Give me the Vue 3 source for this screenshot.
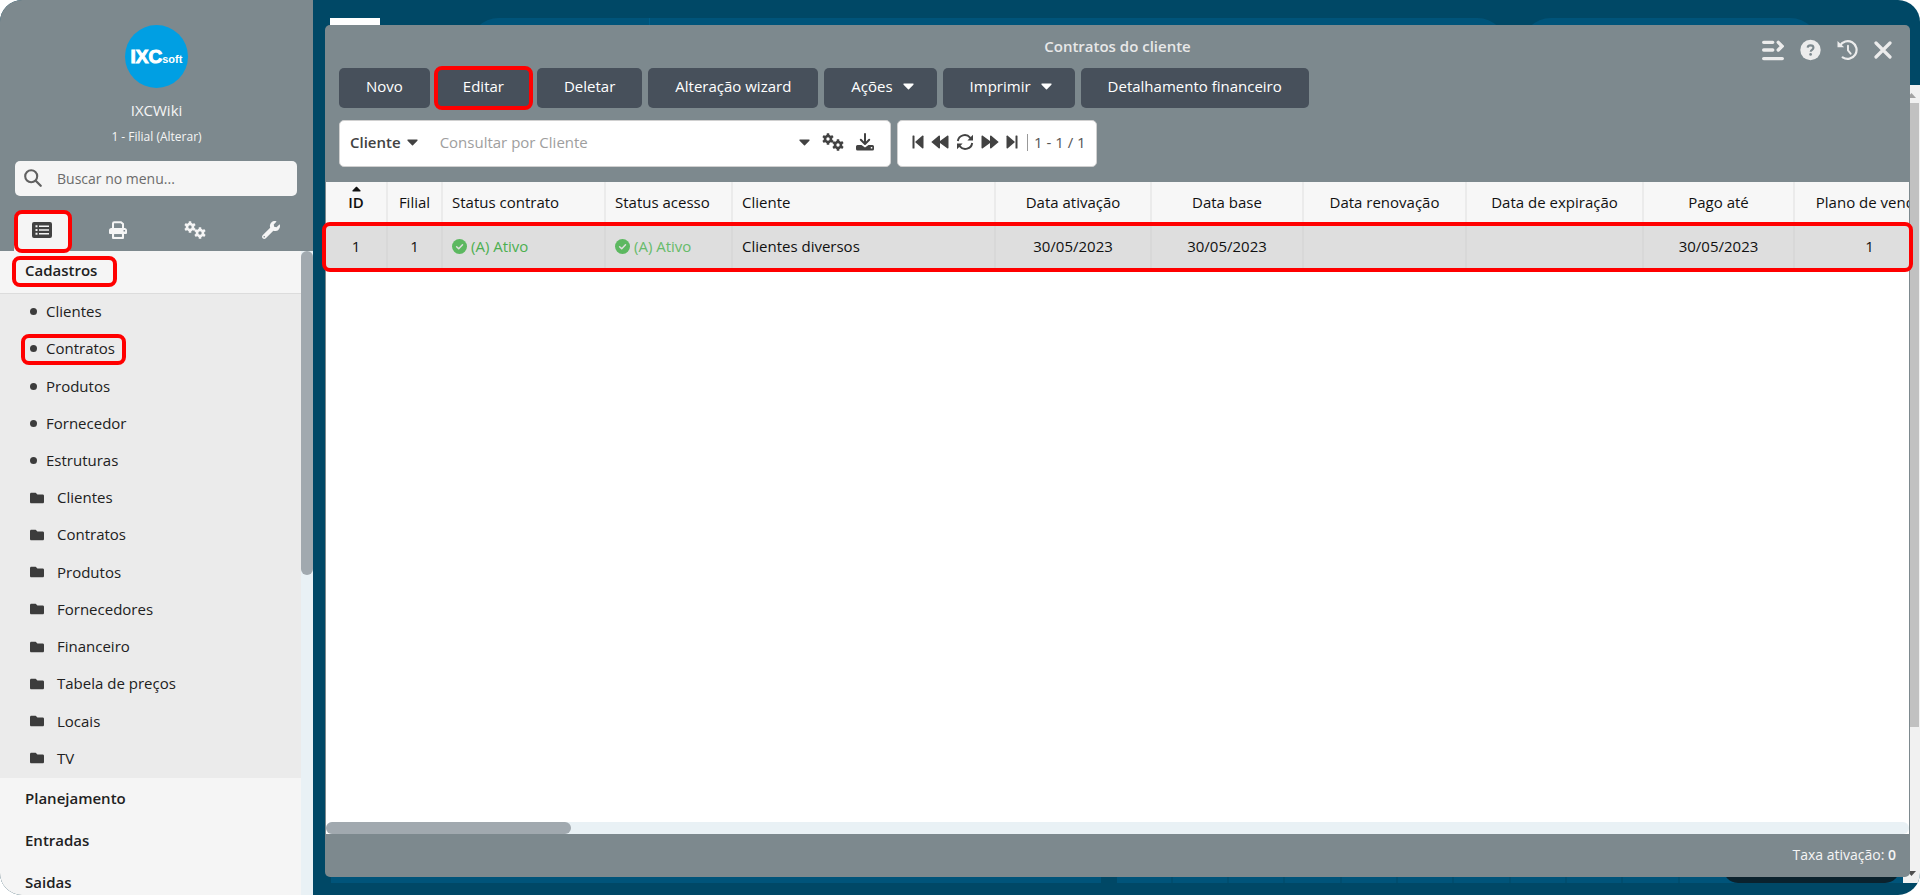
<script setup>
import { ref } from 'vue'

const menuSearch = ref('')
const query = ref('')

const tabs = [
  { id: 'list', label: 'Menu', active: true },
  { id: 'print', label: 'Relatórios' },
  { id: 'gears', label: 'Configurações' },
  { id: 'wrench', label: 'Ferramentas' },
]

const links = [
  { text: 'Clientes' },
  { text: 'Contratos', marked: true },
  { text: 'Produtos' },
  { text: 'Fornecedor' },
  { text: 'Estruturas' },
]
const folders = ['Clientes', 'Contratos', 'Produtos', 'Fornecedores', 'Financeiro', 'Tabela de preços', 'Locais', 'TV']
const sections = ['Planejamento', 'Entradas', 'Saidas']

const actions = [
  { text: 'Novo' },
  { text: 'Editar', marked: true },
  { text: 'Deletar' },
  { text: 'Alteração wizard' },
  { text: 'Ações', caret: true },
  { text: 'Imprimir', caret: true },
  { text: 'Detalhamento financeiro' },
]

const columns = [
  { key: 'id', label: 'ID', sorted: true },
  { key: 'filial', label: 'Filial' },
  { key: 'contrato', label: 'Status contrato', left: true },
  { key: 'acesso', label: 'Status acesso', left: true },
  { key: 'cliente', label: 'Cliente', left: true },
  { key: 'ativacao', label: 'Data ativação' },
  { key: 'base', label: 'Data base' },
  { key: 'renovacao', label: 'Data renovação' },
  { key: 'expiracao', label: 'Data de expiração' },
  { key: 'pago', label: 'Pago até' },
  { key: 'plano', label: 'Plano de venda' },
]
const row = {
  id: '1', filial: '1', contrato: '(A) Ativo', acesso: '(A) Ativo', cliente: 'Clientes diversos',
  ativacao: '30/05/2023', base: '30/05/2023', renovacao: '', expiracao: '', pago: '30/05/2023', plano: '1',
}
const teeth = [0, 60, 120, 180, 240, 300]
</script>

<template>
  <svg class="defs" aria-hidden="true">
    <symbol id="gear" viewBox="0 0 20 20">
      <circle cx="10" cy="10" r="5" fill="none" stroke="currentColor" stroke-width="4.4" />
      <rect v-for="t in teeth" :key="t" x="7.8" y="0.3" width="4.4" height="5" rx="1" fill="currentColor" :transform="`rotate(${t} 10 10)`" />
    </symbol>
    <symbol id="gears" viewBox="0 0 22 18">
      <use href="#gear" x="0" y="0" width="12" height="12" />
      <use href="#gear" x="10" y="6" width="12" height="12" />
    </symbol>
    <symbol id="caret" viewBox="0 0 320 180">
      <path fill="currentColor" d="M31.3 5h257.3c17.8 0 26.7 21.5 14.1 34.1L174.1 167.8c-7.8 7.8-20.5 7.8-28.3 0L17.2 39.1C4.6 26.500 13.5 5 31.3 5z" />
    </symbol>
    <symbol id="folder" viewBox="0 64 512 384">
      <path fill="currentColor" d="M464 128H272l-64-64H48C21.490 64 0 85.490 0 112v288c0 26.510 21.490 48 48 48h416c26.510 0 48-21.490 48-48V176c0-26.510-21.490-48-48-48z" />
    </symbol>
    <symbol id="list" viewBox="0 0 20 16">
      <path fill="currentColor" fill-rule="evenodd" d="M2 0h16a2 2 0 0 1 2 2v12a2 2 0 0 1-2 2H2a2 2 0 0 1-2-2V2a2 2 0 0 1 2-2zM3.500 3.200v2h2v-2zM3.500 7v2h2V7zM3.500 10.800v2h2v-2zM7 3.500v1.400h10V3.500zM7 7.300v1.400h10V7.300zM7 11.100v1.400h10v-1.400z" />
    </symbol>
    <symbol id="print" viewBox="0 0 18 18">
      <path fill="none" stroke="currentColor" stroke-width="2" d="M4 7V2.500A1.300 1.300 0 0 1 5.300 1.200H12L14 3v4" />
      <path fill="currentColor" fill-rule="evenodd" d="M2.500 7h13A2.500 2.500 0 0 1 18 9.500V12a1 1 0 0 1-1 1H1a1 1 0 0 1-1-1V9.500A2.500 2.500 0 0 1 2.500 7zM14.500 9v1.600h1.600V9z" />
      <path fill="currentColor" fill-rule="evenodd" d="M3 11h12v6a1 1 0 0 1-1 1H4a1 1 0 0 1-1-1zM5.200 13.200v2.600h7.600v-2.600z" />
      <rect x="5.200" y="13.200" width="7.600" height="2.600" fill="#7d898e" />
    </symbol>
    <symbol id="wrench" viewBox="0 0 512 512">
      <path fill="currentColor" d="M507.730 109.100c-2.240-9.030-13.540-12.090-20.120-5.510l-74.360 74.360-67.880-11.310-11.310-67.880 74.360-74.360c6.620-6.620 3.430-17.900-5.660-20.160-47.380-11.740-99.550.91-136.580 37.930-39.640 39.640-50.550 97.100-34.050 147.200L18.740 402.760c-24.990 24.990-24.990 65.510 0 90.500 24.990 24.990 65.510 24.990 90.500 0l213.210-213.210c50.120 16.710 107.470 5.680 147.370-34.220 37.070-37.070 49.700-89.320 37.910-136.730zM64 472c-13.250 0-24-10.750-24-24 0-13.260 10.750-24 24-24s24 10.740 24 24c0 13.250-10.750 24-24 24z" />
    </symbol>
    <symbol id="check" viewBox="0 0 15 15">
      <circle cx="7.500" cy="7.500" r="7.500" fill="currentColor" />
      <path d="M4.600 7.700l2.100 2.100 3.800-4" fill="none" stroke="#dedede" stroke-width="1.500" stroke-linecap="round" stroke-linejoin="round" />
    </symbol>
    <symbol id="download" viewBox="0 0 18 18">
      <path d="M9 1v9M4.800 6.800L9 11l4.200-4.200" fill="none" stroke="currentColor" stroke-width="2" stroke-linecap="round" stroke-linejoin="round" />
      <path fill="currentColor" fill-rule="evenodd" d="M1.500 12h4L9 14.600 12.500 12h4A1.500 1.500 0 0 1 18 13.500v2.500a1.500 1.500 0 0 1-1.500 1.500h-15A1.500 1.500 0 0 1 0 16v-2.500A1.500 1.500 0 0 1 1.500 12zM14.800 14v1.500h1.500V14z" />
    </symbol>
    <symbol id="first" viewBox="0 0 12 14">
      <rect x="0.500" y="0.500" width="2" height="13" rx="0.600" fill="currentColor" />
      <path fill="currentColor" d="M3 7L10.200.7c.6-.5 1.300-.1 1.300.6v11.400c0 .7-.7 1.100-1.300.6z" />
    </symbol>
    <symbol id="rewind" viewBox="0 0 18 14">
      <path fill="currentColor" d="M.3 7L7.700.7c.6-.5 1.300-.1 1.300.6v4.600L16.200.7c.6-.5 1.300-.1 1.300.6v11.400c0 .7-.7 1.100-1.300.6L9 8.100v4.600c0 .7-.7 1.100-1.300.6z" />
    </symbol>
    <symbol id="sync" viewBox="0 0 17 16">
      <path d="M1.300 7A7 7 0 0 1 13.600 3.600L15 5M15.700 9A7 7 0 0 1 3.400 12.400L2 11" fill="none" stroke="currentColor" stroke-width="1.900" />
      <path fill="currentColor" d="M16.500.8v5.600h-5.600zM.5 15.200V9.600h5.600z" />
    </symbol>
    <symbol id="expand" viewBox="0 0 23 23">
      <path d="M1.800 3.500h9.400M1.800 11.500h9.400M1.800 20.500h19.400M17 3.500l4 4-4 4" fill="none" stroke="currentColor" stroke-width="3.600" stroke-linecap="round" />
    </symbol>
    <symbol id="help" viewBox="0 0 22 22">
      <circle cx="11" cy="11" r="10.700" fill="currentColor" />
      <path d="M8 8.400C8.200 6.800 9.400 6.200 11 6.200c1.800 0 3.100 1 3.100 2.500 0 2-2.900 2.200-2.900 4.100" fill="none" stroke="#7d898e" stroke-width="2.200" />
      <circle cx="11.100" cy="15.600" r="1.400" fill="#7d898e" />
    </symbol>
    <symbol id="history" viewBox="0 0 22 22">
      <path d="M3 6.600A9.300 9.300 0 1 1 6 18.700" fill="none" stroke="currentColor" stroke-width="2.300" stroke-linecap="round" />
      <path d="M11.500 6.500v5l2.800 3.400" fill="none" stroke="currentColor" stroke-width="2" stroke-linecap="round" />
      <path d="M.5 1.500L7.500 8H.5z" fill="currentColor" />
    </symbol>
    <symbol id="close" viewBox="0 0 18 18">
      <path d="M2 2l14 14M16 2L2 16" fill="none" stroke="currentColor" stroke-width="3.200" stroke-linecap="round" />
    </symbol>
    <symbol id="search" viewBox="0 0 18 18">
      <circle cx="7.200" cy="7.200" r="6" fill="none" stroke="currentColor" stroke-width="2.100" />
      <path d="M11.700 11.700l5 5" stroke="currentColor" stroke-width="2.300" stroke-linecap="round" />
    </symbol>
  </svg>

  <div class="app">
    <aside class="sidebar">
      <header class="profile">
        <div class="logo"><b>IXC</b><small>soft</small></div>
        <div class="company">IXCWiki</div>
        <a class="branch" href="#">1 - Filial (Alterar)</a>
        <label class="menu-search">
          <svg><use href="#search" /></svg>
          <input v-model="menuSearch" type="text" placeholder="Buscar no menu..." aria-label="Buscar no menu">
        </label>
        <nav class="tabs">
          <button v-for="t in tabs" :key="t.id" type="button" :class="['tab', t.id, { active: t.active, marked: t.active }]" :aria-label="t.label">
            <svg><use :href="'#' + t.id" /></svg>
          </button>
        </nav>
      </header>
      <div class="menu">
        <nav class="menu-list">
          <a href="#" class="section open"><span class="marked">Cadastros</span></a>
          <ul class="submenu">
            <li v-for="l in links" :key="l.text">
              <a href="#" :class="['link', { marked: l.marked }]"><i class="dot"></i>{{ l.text }}</a>
            </li>
            <li v-for="f in folders" :key="f">
              <a href="#" class="link folder"><svg><use href="#folder" /></svg>{{ f }}</a>
            </li>
          </ul>
          <a v-for="s in sections" :key="s" href="#" class="section">{{ s }}</a>
        </nav>
        <div class="vtrack"><div class="vthumb"></div></div>
      </div>
    </aside>

    <main class="desktop">
      <div class="backdrop" aria-hidden="true">
        <div class="bg-top">
          <i class="bg-logo"></i><i class="bg-card wide"></i><i class="bg-card small"></i>
        </div>
        <div class="bg-bottom">
          <i class="bg-panel"></i>
          <div class="bg-calendar"><i v-for="n in 14" :key="n"></i></div>
        </div>
        <i class="bg-chat"></i>
        <div class="bg-scroll">
          <svg viewBox="0 0 17 18"><path d="M4 13l4.500-5 4.500 5z" fill="#a3a3a3" /></svg>
          <i></i>
          <svg viewBox="0 0 17 18"><path d="M4 6h9l-4.500 5z" fill="#505050" /></svg>
        </div>
      </div>

      <section class="window">
        <header class="head">
          <h1>Contratos do cliente</h1>
          <div class="controls">
            <button type="button" aria-label="Expandir"><svg><use href="#expand" /></svg></button>
            <button type="button" aria-label="Ajuda" class="round"><svg><use href="#help" /></svg></button>
            <button type="button" aria-label="Histórico" class="round"><svg><use href="#history" /></svg></button>
            <button type="button" aria-label="Fechar" class="close"><svg><use href="#close" /></svg></button>
          </div>
          <div class="actions">
            <button v-for="a in actions" :key="a.text" type="button" :class="['action', { marked: a.marked }]">
              {{ a.text }}<svg v-if="a.caret" class="caret"><use href="#caret" /></svg>
            </button>
          </div>
          <div class="filters">
            <div class="search">
              <button type="button" class="field">Cliente<svg class="caret"><use href="#caret" /></svg></button>
              <input v-model="query" type="text" placeholder="Consultar por Cliente" aria-label="Consultar por Cliente">
              <button type="button" aria-label="Opções"><svg class="caret"><use href="#caret" /></svg></button>
              <button type="button" aria-label="Filtros"><svg class="i-gears"><use href="#gears" /></svg></button>
              <button type="button" aria-label="Baixar"><svg class="i-down"><use href="#download" /></svg></button>
            </div>
            <div class="pager">
              <button type="button" aria-label="Primeira"><svg class="i-end"><use href="#first" /></svg></button>
              <button type="button" aria-label="Anterior"><svg class="i-step"><use href="#rewind" /></svg></button>
              <button type="button" aria-label="Atualizar"><svg class="i-step"><use href="#sync" /></svg></button>
              <button type="button" aria-label="Próxima"><svg class="i-step flip"><use href="#rewind" /></svg></button>
              <button type="button" aria-label="Última"><svg class="i-end flip"><use href="#first" /></svg></button>
              <span class="range">1 - 1 / 1</span>
            </div>
          </div>
        </header>

        <div class="grid">
          <div class="grid-view">
            <table>
              <colgroup><col v-for="c in columns" :key="c.key" :class="'c-' + c.key"></colgroup>
              <thead>
                <tr>
                  <th v-for="c in columns" :key="c.key" scope="col" :class="{ left: c.left, sorted: c.sorted }">
                    <svg v-if="c.sorted" class="sort"><use href="#caret" /></svg>{{ c.label }}
                  </th>
                </tr>
              </thead>
              <tbody>
                <tr>
                  <td v-for="c in columns" :key="c.key" :class="{ left: c.left }">
                    <span v-if="c.key === 'contrato' || c.key === 'acesso'" :class="['status', c.key]"><svg><use href="#check" /></svg>{{ row[c.key] }}</span>
                    <template v-else>{{ row[c.key] }}</template>
                  </td>
                </tr>
              </tbody>
            </table>
          </div>
          <div class="htrack"><div class="hthumb"></div></div>
          <i class="row-mark"></i>
        </div>
        <footer class="foot">Taxa ativação: <b>0</b></footer>
      </section>
    </main>
  </div>
</template>

<style>
body { background: #fff; }
</style>

<style scoped>
* { box-sizing: border-box; }
.defs { position: absolute; width: 0; height: 0; }
.app {
  display: flex;
  height: 100vh;
  border-radius: 22px;
  overflow: hidden;
  background: #004866;
  font-family: "Open Sans", "Noto Sans", sans-serif;
  font-size: 15px;
  color: #212121;
}
a { color: inherit; text-decoration: none; }
i { display: block; }
svg { display: block; }
button { border: 0; padding: 0; background: none; font: inherit; color: inherit; cursor: pointer; }
input { border: 0; outline: 0; background: none; font: inherit; color: inherit; min-width: 0; }
.marked { position: relative; }
.marked::after {
  content: "";
  position: absolute;
  inset: -2px;
  border: 4px solid #f00;
  border-radius: 8px;
}

/* Sidebar */
.sidebar { width: 313px; flex: none; display: flex; flex-direction: column; background: #7d898e; }
.profile { display: flex; flex-direction: column; align-items: center; padding-top: 25px; color: #f5f5f5; }
.logo {
  width: 63px; height: 63px; border-radius: 50%;
  background: #009fe3; color: #fff;
  display: flex; align-items: baseline; justify-content: center;
  font-family: "Liberation Sans", Arial, sans-serif;
  line-height: 64px;
}
.logo b { font-size: 19px; -webkit-text-stroke: 1px #fff; }
.logo small { font-size: 11px; font-weight: bold; }
.company { margin-top: 12px; font-size: 15px; font-weight: 500; line-height: 20px; }
.branch { margin-top: 8px; font-size: 12px; line-height: 18px; }
.menu-search {
  align-self: stretch; height: 35px; margin: 15px 16px 0 15px; padding: 0 9px 1px;
  display: flex; align-items: center; gap: 13px;
  border-radius: 5px; background: #f5f5f5; color: #616161;
}
.menu-search svg { width: 18px; height: 18px; flex: none; }
.menu-search input { flex: 1; font-size: 14px; }
.menu-search input::placeholder { color: #6b6b6b; opacity: 1; }
.tabs { align-self: stretch; display: flex; justify-content: space-between; margin-top: 16px; padding: 0 14px; }
.tab { width: 56px; height: 39px; padding-bottom: 4px; display: flex; align-items: center; justify-content: center; }
.tab.active { background: #f5f5f5; color: #424242; border-radius: 8px 8px 0 0; }
.tab.active::after { inset: -2px -2px -2px 0; }
.tab svg { width: 18px; height: 18px; }
.tab.list svg { width: 20px; height: 16px; }
.tab.gears svg { width: 22px; height: 18px; }
.menu { flex: 1; min-height: 0; display: flex; overflow: hidden; background: #f5f5f5; }
.menu-list { flex: 1; }
.section { display: block; padding: 0 25px 2px; font-weight: 600; line-height: 40px; }
.section.open { border-bottom: 1px solid #dcdcdc; line-height: 38px; padding-bottom: 4px; }
.section.open .marked { display: inline-block; line-height: 31px; }
.section.open .marked::after { inset: 1px -20px -1px -13px; }
.submenu { list-style: none; margin: 0; padding: 0 0 0 30px; min-height: 484px; display: grid; grid-auto-rows: 1fr; background: #ebebeb; }
.submenu li { display: flex; align-items: center; padding-bottom: 2px; }
.link { display: flex; align-items: center; gap: 9px; line-height: 21px; }
.link.marked::after { inset: -4px -11px -6px -9px; }
.link.folder { gap: 13px; }
.link svg { width: 14px; height: 12px; color: #3c3c3c; }
.dot { width: 7px; height: 7px; border-radius: 50%; background: #3c3c3c; }
.vtrack { width: 12px; background: #e9f1f5; }
.vthumb { height: 324px; border-radius: 6px; background: #a1a9af; }

/* Desktop behind the window */
.desktop { position: relative; flex: 1; min-width: 0; padding: 25px 10px 18px 12px; display: flex; }
.backdrop { position: absolute; inset: 18px 0 12px; }
.bg-top { display: flex; height: 76px; padding: 0 100px 0 17px; }
.bg-logo { width: 50px; background: #fff; }
.bg-card { background: #00547a; border-radius: 30px; }
.bg-card.wide { flex: 1; margin-left: 89px; background: linear-gradient(90deg, #00547a 180px, #005f8a 180px, #005f8a 181px, #00547a 181px); }
.bg-card.small { width: 299px; margin-left: 14px; }
.bg-bottom { position: absolute; left: 18px; right: 17px; bottom: 0; height: 12px; display: flex; gap: 16px; }
.bg-panel { flex: 770; background: #00547a; }
.bg-calendar { flex: 787; display: flex; gap: 2px; background: #004e70; }
.bg-calendar i { flex: 1; background: #00547a; }
.bg-chat { position: absolute; right: 20px; bottom: 0; width: 177px; height: 30px; border-radius: 15px; background: #0b222d; }
.bg-scroll { position: absolute; right: 0; top: 67px; bottom: 0; width: 17px; background: #f1f1f1; display: flex; flex-direction: column; }
.bg-scroll svg { width: 17px; height: 18px; flex: none; }
.bg-scroll i { height: 624px; width: 16px; margin-bottom: auto; background: #c1c1c1; }

/* Window */
.window { position: relative; flex: 1; min-width: 0; display: flex; flex-direction: column; background: #7d898e; border-radius: 5px; }
.head { position: relative; padding: 10px 14px 15px; color: #f0f0f0; }
h1 { margin: 0; text-align: center; font-size: 15px; font-weight: 600; line-height: 22px; color: #e8e8e8; }
.controls { position: absolute; top: 14px; right: 18px; display: flex; align-items: center; gap: 16px; color: #ececec; }
.controls svg { width: 22px; height: 22px; }
.controls .round svg { width: 21px; }
.controls .close svg { width: 18px; height: 18px; }
.actions { display: flex; gap: 6px; margin-top: 11px; }
.action {
  height: 40px; padding: 0 27px 4px; border-radius: 5px;
  display: flex; align-items: center; gap: 10px;
  background: #47505b; color: #fff; font-weight: 500; white-space: nowrap;
}
.caret { width: 11px; height: 7px; }
.action .caret { margin-right: -4px; }
.filters { display: flex; gap: 6px; margin-top: 12px; color: #424242; }
.search, .pager { height: 47px; display: flex; align-items: center; background: #fff; border: 1px solid #d0d0d0; border-radius: 5px; }
.search { width: 552px; padding: 0 16px 3px 10px; gap: 12px; }
.search .field { display: flex; align-items: center; gap: 6px; font-weight: 600; }
.search input { flex: 1; padding: 0 0 0 10px; }
.search input::placeholder { color: #9e9e9e; opacity: 1; }
.i-gears { width: 22px; height: 18px; }
.i-down { width: 18px; height: 18px; }
.pager { padding: 0 10px 3px 14px; gap: 7px; }
.i-end { width: 12px; height: 14px; }
.i-step { width: 18px; height: 16px; }
.flip { transform: scaleX(-1); }
.range { margin-left: 2px; padding-left: 6px; border-left: 1px solid #999; line-height: 17px; color: #555; }

.grid { position: relative; flex: 1; min-height: 0; display: flex; flex-direction: column; margin: 0 1px; background: #fff; }
.grid-view { flex: 1; overflow: hidden; }
table { table-layout: fixed; width: 1619px; border-collapse: collapse; color: #111; }
.c-id { width: 61px; } .c-filial { width: 55px; } .c-contrato { width: 163px; } .c-acesso { width: 127px; }
.c-cliente { width: 263px; } .c-ativacao { width: 156px; } .c-base { width: 152px; } .c-renovacao { width: 163px; }
.c-expiracao { width: 177px; } .c-pago { width: 151px; } .c-plano { width: 151px; }
th, td { padding: 0 0 2px; text-align: center; border-right: 2px solid #ebebeb; white-space: nowrap; }
th { position: relative; height: 42px; font-weight: 400; background: #f7f7f7; }
th.sorted { font-weight: 600; }
.sort { position: absolute; top: 4px; left: 26px; width: 9px; height: 6px; transform: rotate(180deg); }
td { height: 46px; background: #dedede; border-color: #d8d8d8; }
.left { text-align: left; padding-left: 9px; }
.status { display: flex; align-items: center; gap: 4px; color: #4caf50; }
.status.acesso { color: #66bb6a; }
.status svg { width: 15px; height: 15px; color: #5cb860; }
.row-mark { position: absolute; left: -4px; right: -4px; top: 40px; height: 50px; border: 4px solid #f00; border-radius: 8px; }
.htrack { height: 12px; border-radius: 6px; background: #e9f1f5; }
.hthumb { width: 245px; height: 12px; border-radius: 6px; background: #a1a9af; }
.foot { height: 43px; padding-right: 14px; text-align: right; line-height: 42px; font-size: 14px; color: #f5f5f5; }
.foot b { font-weight: 600; }
</style>
